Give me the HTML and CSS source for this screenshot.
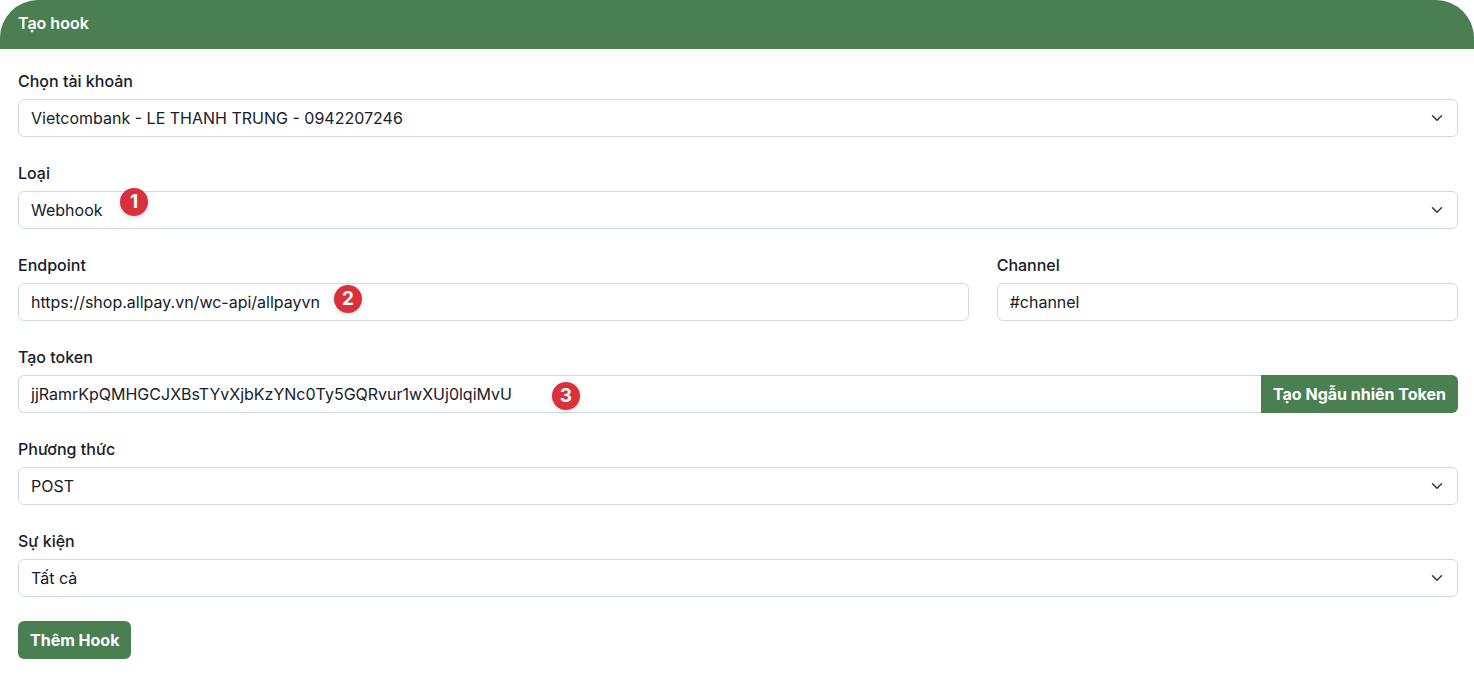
FILE: index.html
```html
<!DOCTYPE html>
<html lang="vi">
<head>
<meta charset="utf-8">
<meta name="viewport" content="width=device-width, initial-scale=1">
<title>Tạo hook</title>
<link rel="stylesheet" href="styles.css">
</head>
<body>
<main class="card">
  <header class="card-header"><h1 class="card-title">Tạo hook</h1></header>
  <form class="card-body">
    <div class="field">
      <label class="label" for="account">Chọn tài khoản</label>
      <select class="control select" id="account"><option>Vietcombank - LE THANH TRUNG - 0942207246</option></select>
    </div>
    <div class="field">
      <label class="label" for="type">Loại</label>
      <div class="control-wrap">
        <select class="control select" id="type"><option>Webhook</option></select>
        <span class="step step-type">1</span>
      </div>
    </div>
    <div class="field field-wide">
      <label class="label" for="endpoint">Endpoint</label>
      <div class="control-wrap">
        <input class="control" id="endpoint" type="text" value="https://shop.allpay.vn/wc-api/allpayvn">
        <span class="step step-endpoint">2</span>
      </div>
    </div>
    <div class="field field-narrow">
      <label class="label" for="channel">Channel</label>
      <input class="control" id="channel" type="text" value="#channel">
    </div>
    <div class="field">
      <label class="label" for="token">Tạo token</label>
      <div class="control-wrap input-group">
        <input class="control" id="token" type="text" value="jjRamrKpQMHGCJXBsTYvXjbKzYNc0Ty5GQRvur1wXUj0lqiMvU">
        <button class="button" type="button">Tạo Ngẫu nhiên Token</button>
        <span class="step step-token">3</span>
      </div>
    </div>
    <div class="field">
      <label class="label" for="method">Phương thức</label>
      <select class="control select" id="method"><option>POST</option></select>
    </div>
    <div class="field">
      <label class="label" for="event">Sự kiện</label>
      <select class="control select" id="event"><option>Tất cả</option></select>
    </div>
    <div class="actions"><button class="button" type="submit">Thêm Hook</button></div>
  </form>
</main>
</body>
</html>
```
FILE: styles.css
```css
* {
  box-sizing: border-box;
}

body {
  margin: 0;
  background: #fff;
  color: #16202b;
  font-family: Inter, "Liberation Sans", sans-serif;
  font-size: 16px;
  line-height: 24px;
}

.card-header {
  padding: 11px 18px 14px;
  border-radius: 38px 38px 0 0;
  background: #4a7f52;
  color: #fff;
}

.card-title {
  margin: 0;
  font-size: 16px;
  font-weight: 600;
}

.card-body {
  display: grid;
  grid-template-columns: repeat(12, minmax(0, 1fr));
  gap: 24px 28px;
  padding: 20px 16px 15px 18px;
}

.field {
  display: flex;
  flex-direction: column;
  gap: 6px;
  grid-column: span 12;
}

.field-wide {
  grid-column: span 8;
}

.field-narrow {
  grid-column: span 4;
}

.label {
  font-weight: 500;
}

.control-wrap {
  position: relative;
}

.control {
  display: block;
  width: 100%;
  height: 38px;
  padding: 0 12px;
  border: 1px solid #cfdce5;
  border-radius: 6px;
  background-color: #fff;
  color: inherit;
  font: inherit;
}

.select {
  appearance: none;
  padding-right: 36px;
  background-image: url("data:image/svg+xml,%3Csvg xmlns='http://www.w3.org/2000/svg' viewBox='0 0 16 16'%3E%3Cpath fill='none' stroke='%23343a40' stroke-linecap='round' stroke-linejoin='round' stroke-width='2' d='m2 5 6 6 6-6'/%3E%3C/svg%3E");
  background-position: right 12px center;
  background-repeat: no-repeat;
  background-size: 16px 12px;
}

.input-group {
  display: flex;
}

.input-group .control {
  flex: 1;
  min-width: 0;
  border-right: 0;
  border-radius: 6px 0 0 6px;
}

.button {
  height: 38px;
  padding: 0 12px;
  border: 0;
  border-radius: 6px;
  background: #4a7f52;
  color: #fff;
  font: inherit;
  font-weight: 700;
}

.input-group .button {
  border-radius: 0 6px 6px 0;
}

.actions {
  display: flex;
  grid-column: span 12;
}

.step {
  position: absolute;
  width: 28px;
  height: 28px;
  border-radius: 50%;
  background: #d9303c;
  box-shadow: 0 2px 5px rgba(0, 0, 0, 0.12);
  color: #fff;
  font-size: 19px;
  font-weight: 700;
  line-height: 28px;
  text-align: center;
}

.step-type {
  top: -3px;
  left: 102px;
}

.step-endpoint {
  top: 2px;
  left: 316px;
}

.step-token {
  top: 7px;
  left: 534px;
}
```
